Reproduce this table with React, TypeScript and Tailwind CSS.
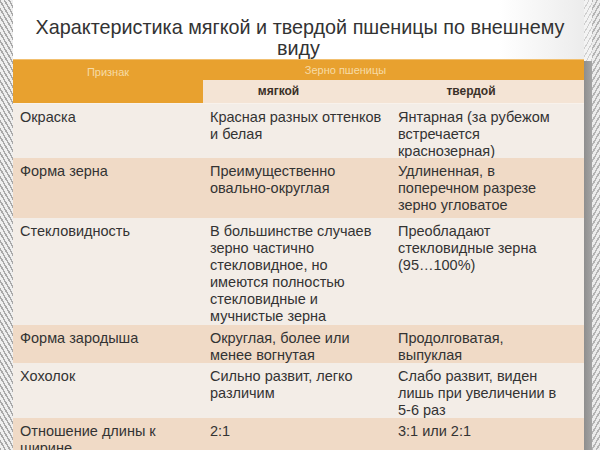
import React from "react";

type Row = { h: string; bg: string; a: string[]; b: string[]; c: string[] };

const LIGHT = "bg-[#f3ede7]";
const PEACH = "bg-[#f0dac6]";

const rows: Row[] = [
  {
    h: "h-[54px]",
    bg: LIGHT,
    a: ["Окраска"],
    b: ["Красная разных оттенков", "и белая"],
    c: ["Янтарная (за рубежом", "встречается", "краснозерная)"],
  },
  {
    h: "h-[60px]",
    bg: PEACH,
    a: ["Форма зерна"],
    b: ["Преимущественно", "овально-округлая"],
    c: ["Удлиненная, в", "поперечном разрезе", "зерно угловатое"],
  },
  {
    h: "h-[107px]",
    bg: LIGHT,
    a: ["Стекловидность"],
    b: [
      "В большинстве случаев",
      "зерно частично",
      "стекловидное, но",
      "имеются полностью",
      "стекловидные и",
      "мучнистые зерна",
    ],
    c: ["Преобладают", "стекловидные зерна", "(95…100%)"],
  },
  {
    h: "h-[38px]",
    bg: PEACH,
    a: ["Форма зародыша"],
    b: ["Округлая, более или", "менее вогнутая"],
    c: ["Продолговатая,", "выпуклая"],
  },
  {
    h: "h-[55px]",
    bg: LIGHT,
    a: ["Хохолок"],
    b: ["Сильно развит, легко", "различим"],
    c: ["Слабо развит, виден", "лишь при увеличении в", "5-6 раз"],
  },
  {
    h: "h-[40px]",
    bg: PEACH,
    a: ["Отношение длины к", "ширине"],
    b: ["2:1"],
    c: ["3:1 или 2:1"],
  },
];

function Cell({ lines, pl }: { lines: string[]; pl: string }) {
  return (
    <div className={`${pl} pt-[5px] leading-[17px]`}>
      {lines.map((l, i) => (
        <div key={i} className="whitespace-nowrap">
          {l}
        </div>
      ))}
    </div>
  );
}

export default function App() {
  return (
    <div
      className="w-[600px] h-[450px] overflow-hidden flex bg-white text-[#333]"
      style={{ fontFamily: '"Liberation Sans", Arial, sans-serif' }}
    >
      {/* left striped edge */}
      <div className="w-[13px] h-full shrink-0 bg-[repeating-linear-gradient(60deg,#a9a9a9_0px,#a9a9a9_1.5px,#efefef_1.5px,#efefef_4px)]" />

      <div className="w-[571px] shrink-0 flex flex-col">
        <div className="pt-[17px] h-[61px] text-center text-[19.8px] leading-[21px] text-[#333] bg-[linear-gradient(to_right,#ffffff_0%,#ffffff_85%,#ececec_100%)]">
          <div className="whitespace-nowrap -ml-[13px] mr-[-16px]">Характеристика мягкой и твердой пшеницы по внешнему</div>
          <div>виду</div>
        </div>

        <div className="flex flex-col text-[14.5px]">
          {/* header */}
          <div className="flex">
            <div className="w-[190px] h-[44px] bg-[#e8a12f] border-t border-[#f2c070] text-[#f6dba6] text-[11px] text-center pt-[4px]">
              Признак
            </div>
            <div className="flex flex-col w-[381px]">
              <div className="h-[21px] bg-[#e8a12f] border-t border-[#f2c070] text-[#f6dba6] text-[11px] text-center pr-[96px] pt-[3px] leading-[14px]">
                Зерно пшеницы
              </div>
              <div className="flex h-[23px] bg-[#f4e4d5] text-[12px] font-bold text-[#3a3028] leading-[23px]">
                <div className="w-[189px] text-center pr-[38px]">мягкой</div>
                <div className="w-[192px] text-center pr-[34px]">твердой</div>
              </div>
            </div>
          </div>
          <div className="h-px bg-[#f8f2ec]" />

          {rows.map((r, i) => (
            <div key={i} className={`flex ${r.h} ${r.bg}`}>
              <div className="w-[190px]">
                <Cell lines={r.a} pl="pl-[7px]" />
              </div>
              <div className="w-[189px]">
                <Cell lines={r.b} pl="pl-[7px]" />
              </div>
              <div className="w-[192px]">
                <Cell lines={r.c} pl="pl-[6px]" />
              </div>
            </div>
          ))}
        </div>
      </div>

      {/* right shadow and stripes */}
      <div className="w-[8px] h-full shrink-0 flex flex-col">
        <div className="h-[61px] bg-[repeating-linear-gradient(120deg,#cfcfcf_0px,#cfcfcf_1px,#f3f3f3_1px,#f3f3f3_4px)]" />
        <div className="flex-1 bg-[linear-gradient(to_right,#8e8e8e,#a4a4a4)]" />
      </div>
      <div className="w-[8px] h-full shrink-0 bg-[repeating-linear-gradient(120deg,#b5b5b5_0px,#b5b5b5_1.5px,#ececec_1.5px,#ececec_4px)]" />
    </div>
  );
}
